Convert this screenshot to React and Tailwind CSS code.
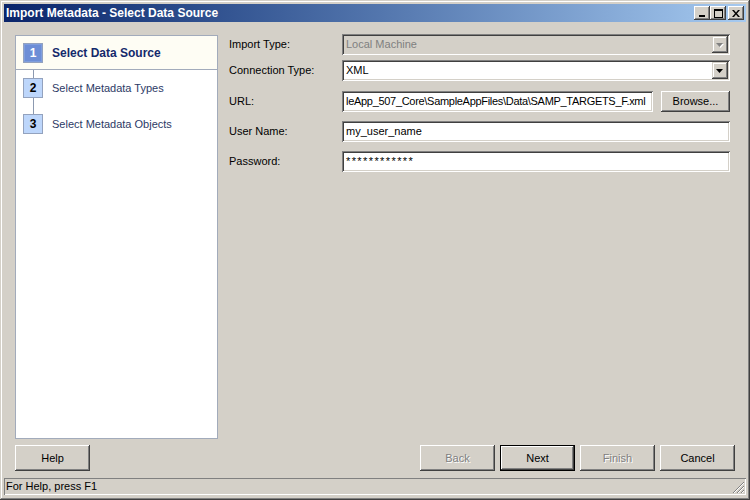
import React from "react";

const raised =
  "shadow-[inset_-1px_-1px_0_#404040,inset_1px_1px_0_#ffffff,inset_-2px_-2px_0_#808080,inset_2px_2px_0_#d4d0c8]";
const sunken =
  "shadow-[inset_1px_1px_0_#808080,inset_-1px_-1px_0_#ffffff,inset_2px_2px_0_#404040,inset_-2px_-2px_0_#d4d0c8]";

function Arrow({ disabled }) {
  return (
    <svg width="16" height="17" viewBox="0 0 16 17">
      {disabled && <path d="M5 8h7l-3.5 4z" fill="#ffffff" />}
      <path d="M4 7h7l-3.5 4z" fill={disabled ? "#808080" : "#000000"} />
    </svg>
  );
}

function Combo({ value, disabled }) {
  return (
    <div
      className={`relative h-[21px] w-[388px] ${sunken} ${
        disabled ? "bg-[#d4d0c8] text-[#808080]" : "bg-white text-black"
      } flex items-center pl-[4px]`}
    >
      <span className="text-[11px] leading-none">{value}</span>
      <div className="absolute right-[2px] top-[2px] h-[17px] w-[16px] bg-[#d4d0c8] shadow-[inset_-1px_-1px_0_#404040,inset_1px_1px_0_#d4d0c8,inset_-2px_-2px_0_#808080,inset_2px_2px_0_#ffffff]">
        <Arrow disabled={disabled} />
      </div>
    </div>
  );
}

function Field({ value, width = "w-[388px]", tracking = "" }) {
  return (
    <div
      className={`h-[21px] ${width} ${sunken} bg-white flex items-center pl-[4px] overflow-hidden whitespace-nowrap`}
    >
      <span className={`text-[11px] leading-none text-black ${tracking}`}>{value}</span>
    </div>
  );
}

function Btn({ children, disabled, def, className = "" }) {
  const inner = (
    <div
      className={`h-full w-full flex items-center justify-center bg-[#d4d0c8] text-[11px] ${raised} ${
        disabled ? "text-[#808080] [text-shadow:1px_1px_0_#ffffff]" : "text-black"
      }`}
    >
      {children}
    </div>
  );
  if (def) {
    return (
      <div className={`h-[26px] w-[75px] border border-black ${className}`}>{inner}</div>
    );
  }
  return <div className={`h-[26px] w-[75px] ${className}`}>{inner}</div>;
}

function Row({ label, children, mt }) {
  return (
    <div className={`flex items-center ${mt}`}>
      <div className="w-[113px] text-[11px] text-black leading-none">{label}</div>
      {children}
    </div>
  );
}

function TitleBtn({ children, className = "" }) {
  return (
    <div
      className={`h-[14px] w-[16px] bg-[#d4d0c8] ${raised} flex items-center justify-center ${className}`}
    >
      {children}
    </div>
  );
}

export default function App() {
  return (
    <div className="w-[750px] h-[500px] bg-[#d4d0c8] p-[4px] shadow-[inset_-1px_-1px_0_#404040,inset_1px_1px_0_#d4d0c8,inset_-2px_-2px_0_#808080,inset_2px_2px_0_#ffffff] font-['Liberation_Sans',Arial,sans-serif] flex flex-col overflow-hidden">
      {/* Title bar */}
      <div className="h-[18px] bg-gradient-to-r from-[#0a246a] to-[#a6caf0] flex items-center pl-[2px] pr-[2px]">
        <span className="text-white font-bold text-[12px] leading-none flex-1">
          Import Metadata - Select Data Source
        </span>
        <div className="flex items-center">
          <TitleBtn>
            <svg width="8" height="8" viewBox="0 0 8 8">
              <rect x="1" y="6" width="6" height="2" fill="#000" />
            </svg>
          </TitleBtn>
          <TitleBtn>
            <svg width="9" height="9" viewBox="0 0 9 9">
              <rect x="0.5" y="0.5" width="8" height="8" fill="none" stroke="#000" />
              <rect x="0" y="0" width="9" height="2" fill="#000" />
            </svg>
          </TitleBtn>
          <TitleBtn className="ml-[2px]">
            <svg width="8" height="7" viewBox="0 0 8 7">
              <path d="M0 0h2l2 2.5L6 0h2L5 3.5 8 7H6L4 4.5 2 7H0l3-3.5z" fill="#000" />
            </svg>
          </TitleBtn>
        </div>
      </div>

      {/* Body */}
      <div className="flex-1 flex flex-col">
        <div className="flex mt-[12px] pl-[11px]">
          {/* Steps panel */}
          <div className="relative mt-[1px] w-[203px] h-[404px] border border-[#a2abbb] bg-white">
            <div className="absolute left-[17px] top-[26px] w-[1px] h-[52px] bg-[#8c99b0]" />
            <div className="relative h-[34px] bg-[#fefdf4] border-b border-[#a2abbb] flex items-center pl-[7px]">
              <div className="h-[20px] w-[20px] bg-[#6d8ed6] border border-[#93a2be] flex items-center justify-center text-white font-bold text-[12px] shadow-[inset_0_0_0_1px_#7f9ede]">
                1
              </div>
              <span className="ml-[9px] text-[12px] font-bold text-[#14296b] leading-none">
                Select Data Source
              </span>
            </div>
            <div className="relative h-[36px] flex items-center pl-[7px]">
              <div className="h-[20px] w-[20px] bg-[#bdd6fb] border border-[#93a2be] flex items-center justify-center text-black font-bold text-[12px]">
                2
              </div>
              <span className="ml-[9px] text-[11px] text-[#2c3a66] leading-none">
                Select Metadata Types
              </span>
            </div>
            <div className="relative h-[36px] flex items-center pl-[7px]">
              <div className="h-[20px] w-[20px] bg-[#bdd6fb] border border-[#93a2be] flex items-center justify-center text-black font-bold text-[12px]">
                3
              </div>
              <span className="ml-[9px] text-[11px] text-[#2c3a66] leading-none">
                Select Metadata Objects
              </span>
            </div>
          </div>

          {/* Form */}
          <div className="ml-[11px] flex flex-col">
            <Row label="Import Type:">
              <Combo value="Local Machine" disabled />
            </Row>
            <Row label="Connection Type:" mt="mt-[5px]">
              <Combo value="XML" />
            </Row>
            <Row label="URL:" mt="mt-[9px]">
              <Field
                value="leApp_507_Core\SampleAppFiles\Data\SAMP_TARGETS_F.xml"
                width="w-[311px]"
                tracking="tracking-[-0.3px]"
              />
              <div className="ml-[8px] mt-[1px] h-[21px] w-[69px]">
                <div
                  className={`h-full w-full flex items-center justify-center bg-[#d4d0c8] text-[11px] text-black ${raised}`}
                >
                  Browse...
                </div>
              </div>
            </Row>
            <Row label="User Name:" mt="mt-[9px]">
              <Field value="my_user_name" />
            </Row>
            <Row label="Password:" mt="mt-[9px]">
              <Field value="************" tracking="tracking-[1.4px]" />
            </Row>
          </div>
        </div>

        {/* Buttons */}
        <div className="flex mt-[6px] pl-[11px]">
          <Btn>Help</Btn>
          <div className="flex ml-[330px] gap-[5px]">
            <Btn disabled>Back</Btn>
            <Btn def>Next</Btn>
            <Btn disabled>Finish</Btn>
            <Btn>Cancel</Btn>
          </div>
        </div>

        {/* Status bar */}
        <div className="relative mt-[7px] h-[17px] shadow-[inset_1px_1px_0_#808080,inset_-1px_-1px_0_#ffffff] flex items-center pl-[2px]">
          <span className="text-[11px] text-black leading-none">For Help, press F1</span>
          <svg
            className="absolute right-[1px] bottom-[1px]"
            width="13"
            height="13"
            viewBox="0 0 13 13"
          >
            <path d="M12 1L1 12M12 5L5 12M12 9L9 12" stroke="#808080" strokeWidth="1" />
            <path d="M12 2L2 12M12 6L6 12M12 10L10 12" stroke="#ffffff" strokeWidth="1" />
          </svg>
        </div>
      </div>
    </div>
  );
}
